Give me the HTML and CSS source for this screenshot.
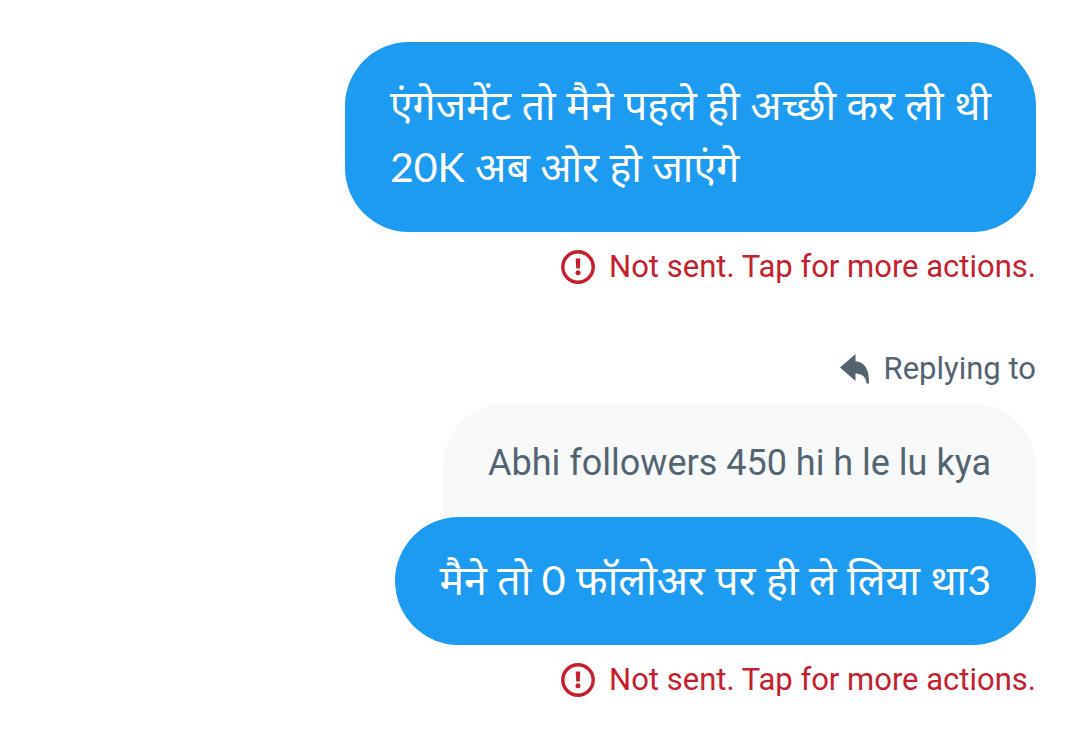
FILE: index.html
```html
<!DOCTYPE html>
<html lang="hi">
<head>
<meta charset="utf-8">
<meta name="viewport" content="width=device-width, initial-scale=1">
<title>Messages</title>
<link rel="stylesheet" href="styles.css">
</head>
<body>
<main class="thread">
  <article class="message">
    <p class="bubble">एंगेजमेंट तो मैने पहले ही अच्छी कर ली थी<br>20K अब ओर हो जाएंगे</p>
    <button class="status" type="button">
      <svg class="alert" viewBox="0 0 34 34" aria-hidden="true"><circle cx="17" cy="17" r="15.2" fill="none" stroke="currentColor" stroke-width="3.4"/><path d="M14.700 8.600h4.600l-.5 10h-3.600z" fill="currentColor"/><circle cx="17" cy="22.800" r="2.500" fill="currentColor"/></svg>
      <span>Not sent. Tap for more actions.</span>
    </button>
  </article>
  <article class="message">
    <div class="reply-label">
      <svg class="arrow" viewBox="0 0 30 30" aria-hidden="true"><path d="M0 13.500 15.500 0v7.200C24.500 8 29.500 15 29 29.500h-2.500C26 23 22 19.500 15.500 19.500V27z" fill="currentColor"/></svg>
      <span>Replying to</span>
    </div>
    <blockquote class="quote">Abhi followers 450 hi h le lu kya</blockquote>
    <p class="bubble bubble-reply">मैने तो 0 फॉलोअर पर ही ले लिया था3</p>
    <button class="status" type="button">
      <svg class="alert" viewBox="0 0 34 34" aria-hidden="true"><circle cx="17" cy="17" r="15.2" fill="none" stroke="currentColor" stroke-width="3.4"/><path d="M14.700 8.600h4.600l-.5 10h-3.600z" fill="currentColor"/><circle cx="17" cy="22.800" r="2.500" fill="currentColor"/></svg>
      <span>Not sent. Tap for more actions.</span>
    </button>
  </article>
</main>
</body>
</html>
```
FILE: styles.css
```css
* { box-sizing: border-box; }
body {
  margin: 0;
  background: #fff;
  font-family: Roboto, "Noto Sans", sans-serif;
}
.thread {
  display: flex;
  flex-direction: column;
  gap: 62px;
  padding: 42px 44px 40px;
}
.message {
  display: flex;
  flex-direction: column;
  align-items: flex-end;
}
.bubble {
  margin: 0;
  padding: 32px 45px 34px;
  border-radius: 64px;
  background: #1d9bf0;
  color: #fff;
  font-family: Lato, "Noto Sans", "Noto Sans Devanagari", sans-serif;
  font-size: 41px;
  line-height: 62px;
}
.status {
  display: flex;
  align-items: center;
  gap: 14px;
  margin-top: 15px;
  padding: 0;
  border: 0;
  background: none;
  color: #c4202e;
  font-family: inherit;
  font-size: 31px;
  line-height: 40px;
}
.alert { width: 34px; height: 34px; }
.reply-label {
  display: flex;
  align-items: center;
  gap: 14px;
  color: #536471;
  font-size: 31px;
  line-height: 40px;
}
.arrow { width: 30px; height: 30px; }
.quote {
  margin: 14px 0 0;
  padding: 33px 45px 79px;
  border-radius: 64px 64px 0 0;
  background: #f7f9f9;
  color: #536471;
  font-size: 36px;
  line-height: 54px;
}
.bubble-reply { margin-top: -52px; }
```
